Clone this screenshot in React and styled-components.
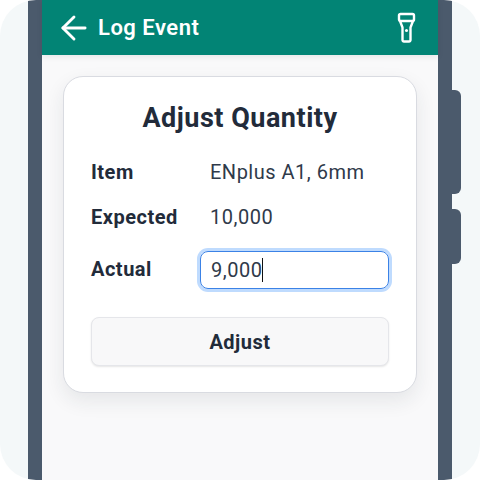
import React from "react";
import styled, { createGlobalStyle } from "styled-components";
import { ArrowLeft } from "lucide-react";

const Global = createGlobalStyle`
  html, body {
    margin: 0;
    padding: 0;
    background: #ffffff;
  }
`;
const Backdrop = styled.div`
  width: 480px;
  height: 480px;
  background: #f4f8f9;
  border-radius: 36px;
  padding: 0 28px;
  box-sizing: border-box;
  overflow: hidden;
`;
const Phone = styled.div`
  position: relative;
  width: 424px;
  height: 480px;
  background: #4b5a6c;
  padding: 0 14px;
  box-sizing: border-box;
`;
const SideButton = styled.div`
  position: absolute;
  left: 424px;
  top: ${(p) => p.$top}px;
  width: 9px;
  height: ${(p) => p.$height}px;
  background: #4b5a6c;
  border-radius: 0 6px 6px 0;
`;
const Screen = styled.div`
  height: 480px;
  background: #f9f9fa;
  display: flex;
  flex-direction: column;
  font-family: Roboto, "Liberation Sans", sans-serif;
  letter-spacing: 0.5px;
`;
const Header = styled.div`
  height: 55px;
  flex: none;
  background: #028475;
  color: #fff;
  display: flex;
  align-items: center;
  padding: 0 22px 0 13px;
  box-shadow: 0 2px 6px rgba(0, 0, 0, 0.08);
`;
const Title = styled.div`
  font-size: 22px;
  font-weight: 600;
  margin-left: 5px;
  flex: 1;
`;
const Card = styled.div`
  margin: 21px 21px 0;
  height: 317px;
  box-sizing: border-box;
  background: #fff;
  border: 1px solid #d9dbe1;
  border-radius: 20px;
  padding: 24px 27px 0;
  box-shadow: 0 8px 20px rgba(30, 40, 60, 0.09);
`;
const Heading = styled.h1`
  margin: 0 0 18px;
  font-size: 27px;
  line-height: 34px;
  font-weight: 700;
  text-align: center;
  color: #222b3a;
`;
const Row = styled.div`
  display: flex;
  align-items: center;
  height: 38px;
  margin-bottom: ${(p) => p.$mb || 7}px;
  color: #222b3a;
`;
const Label = styled.div`
  width: 119px;
  font-size: 20px;
  font-weight: 700;
`;
const Value = styled.div`
  font-size: 20px;
  color: #2f3a4a;
`;
const Field = styled.div`
  width: 189px;
  height: 38px;
  box-sizing: border-box;
  margin: 2px 0 0 -10px;
  padding-left: 10px;
  border: 1px solid #3b82e6;
  border-radius: 8px;
  box-shadow: 0 0 0 3px #bfdbfe;
  display: flex;
  align-items: center;
  font-size: 20px;
  color: #2f3a4a;
`;
const Caret = styled.span`
  width: 1px;
  height: 24px;
  background: #111;
`;
const AdjustButton = styled.button`
  display: block;
  width: 100%;
  height: 49px;
  margin-top: 29px;
  background: #f8f8f9;
  border: 1px solid #e5e6ea;
  border-radius: 8px;
  box-shadow: 0 1px 2px rgba(0, 0, 0, 0.1);
  font-family: Roboto, sans-serif;
  font-size: 20px;
  font-weight: 700;
  letter-spacing: 0.5px;
  color: #222b3a;
`;

const Flashlight = () => (
  <svg width="19" height="31" viewBox="0 0 19 31" fill="none" stroke="#fff" strokeWidth="2.4" strokeLinejoin="round" strokeLinecap="round">
    <rect x="2" y="2" width="15" height="7" rx="1.5" />
    <path d="M3 9l2.500 6.500V28a1.500 1.500 0 0 0 1.500 1.500h5a1.500 1.500 0 0 0 1.500-1.500V15.500L16 9" />
    <circle cx="9.500" cy="18.500" r="1.500" fill="#fff" stroke="none" />
  </svg>
);

export default function App() {
  return (
    <Backdrop>
      <Global />
      <Phone>
        <SideButton $top={90} $height={104} />
        <SideButton $top={209} $height={55} />
        <Screen>
          <Header>
            <ArrowLeft size={38} strokeWidth={1.8} />
            <Title>Log Event</Title>
            <Flashlight />
          </Header>
          <Card>
            <Heading>Adjust Quantity</Heading>
            <Row>
              <Label>Item</Label>
              <Value>ENplus A1, 6mm</Value>
            </Row>
            <Row $mb={14}>
              <Label>Expected</Label>
              <Value>10,000</Value>
            </Row>
            <Row>
              <Label>Actual</Label>
              <Field>
                9,000
                <Caret />
              </Field>
            </Row>
            <AdjustButton>Adjust</AdjustButton>
          </Card>
        </Screen>
      </Phone>
    </Backdrop>
  );
}
